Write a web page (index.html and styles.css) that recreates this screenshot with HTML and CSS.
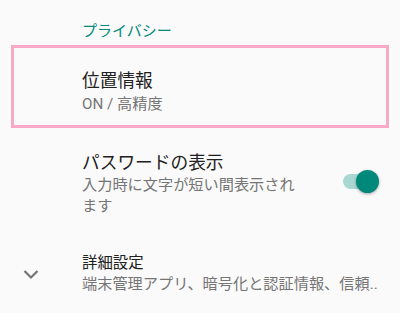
FILE: index.html
```html
<!DOCTYPE html>
<html lang="ja">
<head>
  <meta charset="UTF-8" />
  <meta name="viewport" content="width=device-width, initial-scale=1.0"/>
  <title>セキュリティ</title>
  <link rel="stylesheet" href="styles.css">
</head>
<body>

  <div class="category">プライバシー</div>

  <!-- highlighted item -->
  <div class="pref highlight">
    <div class="pref-text">
      <div class="title">位置情報</div>
      <div class="summary">ON / 高精度</div>
    </div>
  </div>

  <div class="pref password">
    <div class="pref-text">
      <div class="title">パスワードの表示</div>
      <div class="summary">入力時に文字が短い間表示されます</div>
    </div>
    <div class="switch">
      <div class="track"></div>
      <div class="thumb"></div>
    </div>
  </div>

  <div class="pref advanced">
    <div class="icon">
      <svg width="24" height="24" viewBox="0 0 24 24">
        <polyline points="5.5,9 12,15.5 18.5,9" fill="none" stroke="#757575" stroke-width="2.2"/>
      </svg>
    </div>
    <div class="pref-text">
      <div class="title small">詳細設定</div>
      <div class="summary nowrap">端末管理アプリ、暗号化と認証情報、信頼..</div>
    </div>
  </div>

</body>
</html>
```

FILE: styles.css
```css
* {
  box-sizing: border-box;
  margin: 0;
  padding: 0;
  font-family: Roboto, "Noto Sans CJK JP", "Noto Sans", sans-serif;
}

body {
  background: #fafafa;
  width: 400px;
  height: 313px;
  overflow: hidden;
}

.category {
  padding: 20.5px 0 4.5px 82px;
  font-size: 15px;
  line-height: 20px;
  color: #00897b;
}

.pref {
  display: flex;
  align-items: center;
}

.pref-text {
  flex: 1;
  min-width: 0;
}

.title {
  font-size: 17.7px;
  line-height: 24px;
  color: #212121;
}

.title.small {
  font-size: 15.4px;
  line-height: 21px;
}

.summary {
  font-size: 15.2px;
  line-height: 21px;
  color: #757575;
}

.nowrap {
  white-space: nowrap;
  overflow: hidden;
}

.highlight {
  margin: 0 11px;
  border: 3px solid #f8a9c6;
  padding: 21px 0 10px 68px;
}

.highlight .summary {
  line-height: 22px;
}

.password {
  padding: 22.5px 21px 14.5px 82px;
}

.password .pref-text {
  margin-right: 44px;
}

.switch {
  position: relative;
  width: 36px;
  height: 22px;
  margin-top: -5px;
}

.track {
  position: absolute;
  left: 0;
  top: 4px;
  width: 34px;
  height: 15px;
  border-radius: 8px;
  background: #a9d8d3;
}

.thumb {
  position: absolute;
  right: 0;
  top: 0;
  width: 23px;
  height: 23px;
  border-radius: 50%;
  background: #00897b;
  box-shadow: 0 1px 3px rgba(0,0,0,0.35);
}

.advanced {
  padding: 22px 0 0 0;
}

.advanced .icon {
  width: 82px;
  padding-left: 19px;
  display: flex;
  padding-top: 1px;
}

.advanced .summary {
  line-height: 20px;
}
```
